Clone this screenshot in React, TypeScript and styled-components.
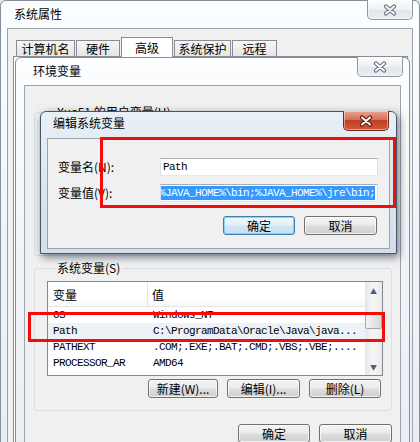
import React from 'react'
import styled, { createGlobalStyle } from 'styled-components'

const GlobalStyle = createGlobalStyle`
  html, body {
    margin: 0;
    padding: 0;
  }
  body {
    width: 420px;
    height: 442px;
    overflow: hidden;
    background: #fff;
    color: #000;
    font-family: "Noto Sans CJK SC", "Liberation Sans", sans-serif;
    font-size: 12px;
  }
`

const mono = `"Liberation Mono", "Noto Sans CJK SC", monospace`

const Desktop = styled.div`
  position: relative;
  width: 420px;
  height: 442px;
  overflow: hidden;
  background: #dfe6ee;
`

interface WinProps {
  $x: number
  $y: number
  $w: number
  $h: number
  $bar: number
  $side: number
  $active?: boolean
}

const Window = styled.div<WinProps>`
  position: absolute;
  left: ${p => p.$x}px;
  top: ${p => p.$y}px;
  width: ${p => p.$w}px;
  height: ${p => p.$h}px;
  box-sizing: border-box;
  display: flex;
  flex-direction: column;
  padding: 0 ${p => p.$side}px 4px;
  border: 1px solid ${p => (p.$active ? '#45566a' : '#858f9a')};
  border-radius: 6px 6px 0 0;
  background: ${p =>
    p.$active
      ? 'linear-gradient(#e9eff6, #dae4ef 60%, #d4dfec)'
      : 'linear-gradient(#fcfdfe, #f1f4f7 50%, #e9edf2)'};
  box-shadow: ${p => (p.$active ? '2px 3px 9px rgba(25, 35, 55, 0.6)' : 'none')};

  & > header {
    height: ${p => p.$bar}px;
  }
`

const TitleBar = styled.header<{ $indent: number; $lift?: number }>`
  display: flex;
  align-items: center;
  padding-left: ${p => p.$indent}px;
  padding-bottom: ${p => p.$lift ?? 2}px;
  box-sizing: border-box;
  font-size: 12px;
  color: #000;
`

const CloseBtn = styled.div<{ $right: number; $active?: boolean }>`
  position: absolute;
  top: -1px;
  right: ${p => p.$right}px;
  width: 46px;
  height: 20px;
  box-sizing: border-box;
  display: flex;
  align-items: center;
  justify-content: center;
  border: 1px solid ${p => (p.$active ? '#6b2a1e' : '#8c97a3')};
  border-top: none;
  border-radius: 0 0 5px 5px;
  background: ${p =>
    p.$active
      ? 'linear-gradient(#e8a493, #d4705a 45%, #c1401f 50%, #d0573b 100%)'
      : 'linear-gradient(#fdfdfd, #eef1f4 50%, #e2e6eb 51%, #eaedf1)'};
  box-shadow: inset 0 0 0 1px rgba(255, 255, 255, 0.45);
`

const Client = styled.div`
  flex: 1;
  display: flex;
  flex-direction: column;
  min-height: 0;
  background: #f0f0f0;
  border: 1px solid #9aa4ae;
`

/* ---------- outer 系统属性 ---------- */

const TabStrip = styled.div`
  display: flex;
  align-items: flex-end;
  gap: 1px;
  height: 27px;
  padding-left: 8px;
  box-sizing: border-box;
`

const Tab = styled.div<{ $w: number; $on?: boolean }>`
  width: ${p => p.$w}px;
  height: ${p => (p.$on ? 20 : 16)}px;
  box-sizing: border-box;
  display: flex;
  align-items: center;
  justify-content: center;
  border: 1px solid #898c95;
  border-bottom: none;
  margin-bottom: ${p => (p.$on ? -1 : 0)}px;
  position: relative;
  background: ${p => (p.$on ? '#fff' : 'linear-gradient(#f6f6f6, #e6e6e6)')};
  font-size: 12px;
  line-height: 14px;
`

const TabPanel = styled.div`
  flex: 1;
  margin: 0 4px 0 5px;
  border: 1px solid #898c95;
  background: #fff;
`

/* ---------- 环境变量 ---------- */

const Group = styled.fieldset<{ $h: number; $top: number }>`
  margin: ${p => p.$top}px 8px 0 9px;
  height: ${p => p.$h}px;
  box-sizing: border-box;
  border: 1px solid #d5dfe5;
  border-radius: 3px;
  padding: 5px 8px 0 12px;
  min-width: 0;
  display: flex;
  flex-direction: column;
`

const Legend = styled.legend`
  margin-left: 8px;
  padding: 0 2px;
  font-size: 12px;
  line-height: 16px;
`

const ListBox = styled.div`
  height: 95px;
  box-sizing: border-box;
  display: flex;
  border: 1px solid #828790;
  background: #fff;
`

const Table = styled.div`
  flex: 1;
  min-width: 0;
  display: flex;
  flex-direction: column;
  overflow: hidden;
`

const HeadRow = styled.div`
  display: grid;
  grid-template-columns: 100px 1fr;
  height: 25px;
  flex-shrink: 0;
  box-sizing: border-box;
  border-bottom: 1px solid #e5e5e5;
  background: linear-gradient(#fff, #fff 60%, #f7f8f9);
  font-size: 12px;
`

const HeadCell = styled.div<{ $sep?: boolean }>`
  display: flex;
  align-items: center;
  padding-left: ${p => (p.$sep ? 4 : 5)}px;
  border-right: ${p => (p.$sep ? 'none' : '1px solid #e3e5e8')};
`

const Row = styled.div<{ $sel?: boolean }>`
  display: grid;
  grid-template-columns: 100px 1fr;
  height: 16px;
  flex-shrink: 0;
  align-items: center;
  background: ${p => (p.$sel ? '#edf2f7' : 'transparent')};
  font-family: ${mono};
  font-size: 11px;
  letter-spacing: -0.6px;
  white-space: nowrap;
`

const Cell = styled.div`
  overflow: hidden;
  padding-left: 5px;
`

const ScrollBar = styled.div`
  width: 17px;
  display: flex;
  flex-direction: column;
  background: linear-gradient(90deg, #e6e6e6, #f4f4f4 40%, #f4f4f4 60%, #e9e9e9);
`

const ScrollArrow = styled.div`
  height: 17px;
  display: flex;
  align-items: center;
  justify-content: center;
  color: #4d6185;
  font-size: 7px;
`

const Track = styled.div`
  flex: 1;
  padding-top: 15px;
`

const Thumb = styled.div`
  height: 15px;
  box-sizing: border-box;
  border: 1px solid #a3a7ad;
  border-radius: 2px;
  background: linear-gradient(90deg, #f4f4f4, #e6e6e6 50%, #d7d7d7);
`

const BtnRow = styled.div<{ $top: number; $right: number }>`
  display: flex;
  justify-content: flex-end;
  gap: 9px;
  margin-top: ${p => p.$top}px;
  padding-right: ${p => p.$right}px;
`

const Btn = styled.div<{ $w: number; $focus?: boolean }>`
  width: ${p => p.$w}px;
  height: 19px;
  box-sizing: border-box;
  display: flex;
  align-items: center;
  justify-content: center;
  border: 1px solid ${p => (p.$focus ? '#3c7fb1' : '#707070')};
  border-radius: 3px;
  background: ${p =>
    p.$focus
      ? 'linear-gradient(#f0f8fd, #e2f1fb 48%, #cfe7f7 52%, #c3e0f4)'
      : 'linear-gradient(#f3f3f3, #ebebeb 48%, #dddddd 52%, #cfcfcf)'};
  box-shadow: inset 0 0 0 1px ${p => (p.$focus ? 'rgba(120, 200, 245, 0.8)' : 'rgba(255,255,255,0.7)')};
  font-size: 12px;
  line-height: 16px;
`

/* ---------- 编辑系统变量 ---------- */

const Form = styled.div`
  display: grid;
  grid-template-columns: 102px 218px;
  row-gap: 8px;
  padding: 19px 0 0 10px;
  align-items: center;
`

const Label = styled.div`
  font-size: 12px;
  line-height: 18px;
`

const Field = styled.div<{ $end?: boolean }>`
  height: 18px;
  box-sizing: border-box;
  display: flex;
  align-items: center;
  justify-content: ${p => (p.$end ? 'flex-end' : 'flex-start')};
  overflow: hidden;
  padding: 0 2px;
  border: 1px solid #abadb3;
  border-color: #abadb3 #dbdfe6 #e3e9ef #e2e3ea;
  background: #fff;
  font-family: ${mono};
  font-size: 11px;
  letter-spacing: -0.6px;
  white-space: nowrap;
`

const Selected = styled.span`
  flex-shrink: 0;
  background: #3399ff;
  color: #fff;
  line-height: 14px;
`

const Mark = styled.div<{ $x: number; $y: number; $w: number; $h: number }>`
  position: absolute;
  left: ${p => p.$x}px;
  top: ${p => p.$y}px;
  width: ${p => p.$w}px;
  height: ${p => p.$h}px;
  box-sizing: border-box;
  border: 3px solid #f20c0c;
  pointer-events: none;
`

const CloseGlyph: React.FC<{ active?: boolean }> = ({ active }) => (
  <svg width="14" height="12" viewBox="0 0 14 12">
    <path
      d="M3 2.5 L11 9.5 M11 2.5 L3 9.5"
      stroke={active ? '#5a1a0f' : '#6e7884'}
      strokeWidth="4.2"
      strokeLinecap="round"
      fill="none"
    />
    <path
      d="M3 2.5 L11 9.5 M11 2.5 L3 9.5"
      stroke={active ? '#ffffff' : '#f4f6f8'}
      strokeWidth="2"
      strokeLinecap="round"
      fill="none"
    />
  </svg>
)

const sysVars = [
  { name: 'OS', value: 'Windows_NT' },
  { name: 'Path', value: 'C:\\ProgramData\\Oracle\\Java\\java...', sel: true },
  { name: 'PATHEXT', value: '.COM;.EXE;.BAT;.CMD;.VBS;.VBE;....' },
  { name: 'PROCESSOR_AR', value: 'AMD64' },
]

const tabs = [
  { label: '计算机名', w: 59 },
  { label: '硬件', w: 44 },
  { label: '高级', w: 52, on: true },
  { label: '系统保护', w: 57 },
  { label: '远程', w: 45 },
]

const App: React.FC = () => (
  <Desktop>
    <GlobalStyle />

    <Window $x={0} $y={0} $w={420} $h={470} $bar={27} $side={6}>
      <TitleBar $indent={7}>系统属性</TitleBar>
      <CloseBtn $right={6}>
        <CloseGlyph />
      </CloseBtn>
      <Client>
        <TabStrip>
          {tabs.map(t => (
            <Tab key={t.label} $w={t.w} $on={t.on}>
              {t.label}
            </Tab>
          ))}
        </TabStrip>
        <TabPanel />
      </Client>
    </Window>

    <Window $x={15} $y={57} $w={395} $h={420} $bar={27} $side={8}>
      <TitleBar $indent={9}>环境变量</TitleBar>
      <CloseBtn $right={6}>
        <CloseGlyph />
      </CloseBtn>
      <Client>
        <Group $top={18} $h={152}>
          <Legend>Xue51 的用户变量(U)</Legend>
        </Group>
        <Group $top={4} $h={151}>
          <Legend>系统变量(S)</Legend>
          <ListBox>
            <Table>
              <HeadRow>
                <HeadCell>变量</HeadCell>
                <HeadCell $sep>值</HeadCell>
              </HeadRow>
              {sysVars.map(v => (
                <Row key={v.name} $sel={v.sel}>
                  <Cell>{v.name}</Cell>
                  <Cell>{v.value}</Cell>
                </Row>
              ))}
            </Table>
            <ScrollBar>
              <ScrollArrow>▲</ScrollArrow>
              <Track>
                <Thumb />
              </Track>
              <ScrollArrow>▼</ScrollArrow>
            </ScrollBar>
          </ListBox>
          <BtnRow $top={3} $right={2}>
            <Btn $w={70}>新建(W)...</Btn>
            <Btn $w={73}>编辑(I)...</Btn>
            <Btn $w={72}>删除(L)</Btn>
          </BtnRow>
        </Group>
        <BtnRow $top={13} $right={8}>
          <Btn $w={72}>确定</Btn>
          <Btn $w={73}>取消</Btn>
        </BtnRow>
      </Client>
    </Window>

    <Window $x={40} $y={111} $w={357} $h={143} $bar={26} $side={6} $active>
      <TitleBar $indent={6} $lift={5}>编辑系统变量</TitleBar>
      <CloseBtn $right={7} $active>
        <CloseGlyph active />
      </CloseBtn>
      <Client>
        <Form>
          <Label>变量名(N):</Label>
          <Field>Path</Field>
          <Label>变量值(V):</Label>
          <Field $end>
            <Selected>%JAVA_HOME%\bin;%JAVA_HOME%\jre\bin;</Selected>
          </Field>
        </Form>
        <BtnRow $top={14} $right={12}>
          <Btn $w={72} $focus>
            确定
          </Btn>
          <Btn $w={73}>取消</Btn>
        </BtnRow>
      </Client>
    </Window>

    <Mark $x={100} $y={137} $w={296} $h={71} />
    <Mark $x={28} $y={312} $w={357} $h={30} />
  </Desktop>
)

export default App
